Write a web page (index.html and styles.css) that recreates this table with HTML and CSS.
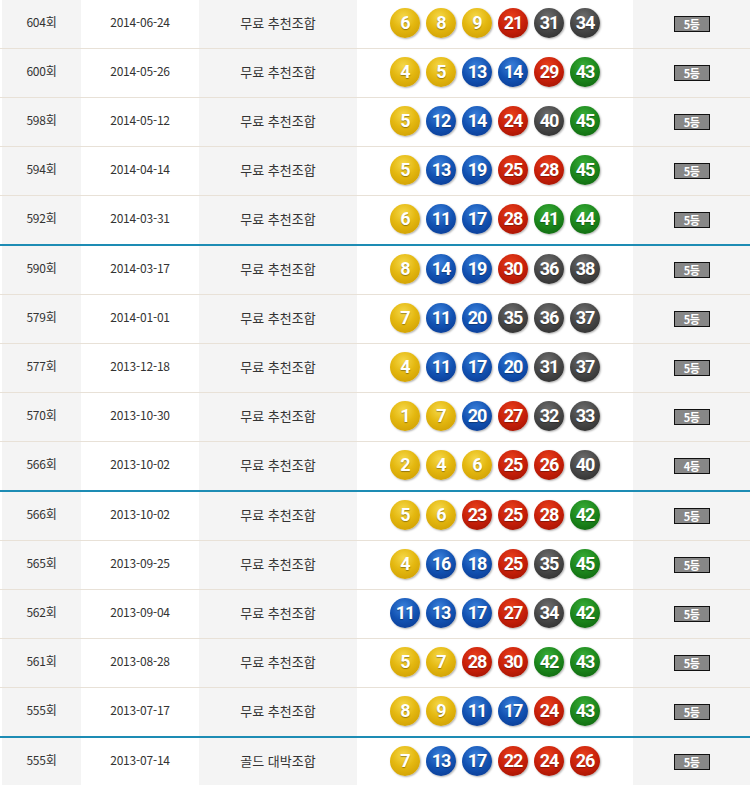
FILE: index.html
```html
<!DOCTYPE html>
<html lang="ko">
<head>
<meta charset="utf-8">
<link rel="stylesheet" href="styles.css">
</head>
<body>
<div class="list">
  <div class="row"><div class="c no">604회</div><div class="c dt">2014-06-24</div><div class="c nm">무료 추천조합</div><div class="c balls"><span class="ball y">6</span><span class="ball y">8</span><span class="ball y">9</span><span class="ball r">21</span><span class="ball g">31</span><span class="ball g">34</span></div><div class="c rk"><span class="badge">5등</span></div></div>
  <div class="row"><div class="c no">600회</div><div class="c dt">2014-05-26</div><div class="c nm">무료 추천조합</div><div class="c balls"><span class="ball y">4</span><span class="ball y">5</span><span class="ball b">13</span><span class="ball b">14</span><span class="ball r">29</span><span class="ball gr">43</span></div><div class="c rk"><span class="badge">5등</span></div></div>
  <div class="row"><div class="c no">598회</div><div class="c dt">2014-05-12</div><div class="c nm">무료 추천조합</div><div class="c balls"><span class="ball y">5</span><span class="ball b">12</span><span class="ball b">14</span><span class="ball r">24</span><span class="ball g">40</span><span class="ball gr">45</span></div><div class="c rk"><span class="badge">5등</span></div></div>
  <div class="row"><div class="c no">594회</div><div class="c dt">2014-04-14</div><div class="c nm">무료 추천조합</div><div class="c balls"><span class="ball y">5</span><span class="ball b">13</span><span class="ball b">19</span><span class="ball r">25</span><span class="ball r">28</span><span class="ball gr">45</span></div><div class="c rk"><span class="badge">5등</span></div></div>
  <div class="row sep"><div class="c no">592회</div><div class="c dt">2014-03-31</div><div class="c nm">무료 추천조합</div><div class="c balls"><span class="ball y">6</span><span class="ball b">11</span><span class="ball b">17</span><span class="ball r">28</span><span class="ball gr">41</span><span class="ball gr">44</span></div><div class="c rk"><span class="badge">5등</span></div></div>
  <div class="row"><div class="c no">590회</div><div class="c dt">2014-03-17</div><div class="c nm">무료 추천조합</div><div class="c balls"><span class="ball y">8</span><span class="ball b">14</span><span class="ball b">19</span><span class="ball r">30</span><span class="ball g">36</span><span class="ball g">38</span></div><div class="c rk"><span class="badge">5등</span></div></div>
  <div class="row"><div class="c no">579회</div><div class="c dt">2014-01-01</div><div class="c nm">무료 추천조합</div><div class="c balls"><span class="ball y">7</span><span class="ball b">11</span><span class="ball b">20</span><span class="ball g">35</span><span class="ball g">36</span><span class="ball g">37</span></div><div class="c rk"><span class="badge">5등</span></div></div>
  <div class="row"><div class="c no">577회</div><div class="c dt">2013-12-18</div><div class="c nm">무료 추천조합</div><div class="c balls"><span class="ball y">4</span><span class="ball b">11</span><span class="ball b">17</span><span class="ball b">20</span><span class="ball g">31</span><span class="ball g">37</span></div><div class="c rk"><span class="badge">5등</span></div></div>
  <div class="row"><div class="c no">570회</div><div class="c dt">2013-10-30</div><div class="c nm">무료 추천조합</div><div class="c balls"><span class="ball y">1</span><span class="ball y">7</span><span class="ball b">20</span><span class="ball r">27</span><span class="ball g">32</span><span class="ball g">33</span></div><div class="c rk"><span class="badge">5등</span></div></div>
  <div class="row sep"><div class="c no">566회</div><div class="c dt">2013-10-02</div><div class="c nm">무료 추천조합</div><div class="c balls"><span class="ball y">2</span><span class="ball y">4</span><span class="ball y">6</span><span class="ball r">25</span><span class="ball r">26</span><span class="ball g">40</span></div><div class="c rk"><span class="badge">4등</span></div></div>
  <div class="row"><div class="c no">566회</div><div class="c dt">2013-10-02</div><div class="c nm">무료 추천조합</div><div class="c balls"><span class="ball y">5</span><span class="ball y">6</span><span class="ball r">23</span><span class="ball r">25</span><span class="ball r">28</span><span class="ball gr">42</span></div><div class="c rk"><span class="badge">5등</span></div></div>
  <div class="row"><div class="c no">565회</div><div class="c dt">2013-09-25</div><div class="c nm">무료 추천조합</div><div class="c balls"><span class="ball y">4</span><span class="ball b">16</span><span class="ball b">18</span><span class="ball r">25</span><span class="ball g">35</span><span class="ball gr">45</span></div><div class="c rk"><span class="badge">5등</span></div></div>
  <div class="row"><div class="c no">562회</div><div class="c dt">2013-09-04</div><div class="c nm">무료 추천조합</div><div class="c balls"><span class="ball b">11</span><span class="ball b">13</span><span class="ball b">17</span><span class="ball r">27</span><span class="ball g">34</span><span class="ball gr">42</span></div><div class="c rk"><span class="badge">5등</span></div></div>
  <div class="row"><div class="c no">561회</div><div class="c dt">2013-08-28</div><div class="c nm">무료 추천조합</div><div class="c balls"><span class="ball y">5</span><span class="ball y">7</span><span class="ball r">28</span><span class="ball r">30</span><span class="ball gr">42</span><span class="ball gr">43</span></div><div class="c rk"><span class="badge">5등</span></div></div>
  <div class="row sep"><div class="c no">555회</div><div class="c dt">2013-07-17</div><div class="c nm">무료 추천조합</div><div class="c balls"><span class="ball y">8</span><span class="ball y">9</span><span class="ball b">11</span><span class="ball b">17</span><span class="ball r">24</span><span class="ball gr">43</span></div><div class="c rk"><span class="badge">5등</span></div></div>
  <div class="row"><div class="c no">555회</div><div class="c dt">2013-07-14</div><div class="c nm">골드 대박조합</div><div class="c balls"><span class="ball y">7</span><span class="ball b">13</span><span class="ball b">17</span><span class="ball r">22</span><span class="ball r">24</span><span class="ball r">26</span></div><div class="c rk"><span class="badge">5등</span></div></div>
</div>
</body>
</html>
```
FILE: styles.css
```css
* { box-sizing: border-box; }
html, body { margin: 0; padding: 0; background: #fff; }
body {
  font-family: "Noto Sans CJK KR", "Noto Sans", sans-serif;
  color: #333;
  width: 750px;
  overflow: hidden;
}
.list { display: flex; flex-direction: column; }
.row {
  display: grid;
  grid-template-columns: 79px 118px 158px 276px 117px;
  height: 49px;
  padding-left: 2px;
  border-bottom: 1px solid #e8e1d7;
}
.row.sep { height: 50px; border-bottom: 2px solid #1d8cb4; }
.c {
  display: flex;
  align-items: center;
  justify-content: center;
  font-size: 12px;
  line-height: 1;
  padding-bottom: 4px;
}
.no, .nm, .rk { background: #f4f4f4; }
.no, .dt { letter-spacing: -0.2px; }
.nm { font-size: 13px; }
.balls { gap: 6px; padding-bottom: 2px; }
.ball {
  width: 30px;
  height: 30px;
  border-radius: 50%;
  display: flex;
  align-items: center;
  justify-content: center;
  color: #fff;
  font-family: Roboto, "DejaVu Sans", sans-serif;
  font-weight: 700;
  font-size: 18px;
  letter-spacing: -1px;
  text-shadow: 0 1px 1px rgba(0,0,0,.35);
  box-shadow: 1px 1px 2px rgba(0,0,0,.3);
}
.ball.y { background: radial-gradient(circle at 45% 30%, #f5d84a 0%, #e4b810 45%, #c99800 100%); }
.ball.b { background: radial-gradient(circle at 45% 30%, #3a80da 0%, #1252b2 50%, #08348a 100%); }
.ball.r { background: radial-gradient(circle at 45% 30%, #e8401c 0%, #c8200a 50%, #981000 100%); }
.ball.g { background: radial-gradient(circle at 45% 30%, #6e6e6e 0%, #474747 50%, #282828 100%); }
.ball.gr { background: radial-gradient(circle at 45% 30%, #38ad38 0%, #1c861c 50%, #0b5e0b 100%); }
.badge {
  width: 36px;
  height: 16px;
  border: 1px solid #111;
  background: #878787;
  color: #fff;
  font-size: 11px;
  font-weight: 700;
  display: flex;
  align-items: center;
  justify-content: center;
  letter-spacing: -0.5px;
  margin-top: 4px;
}
```
